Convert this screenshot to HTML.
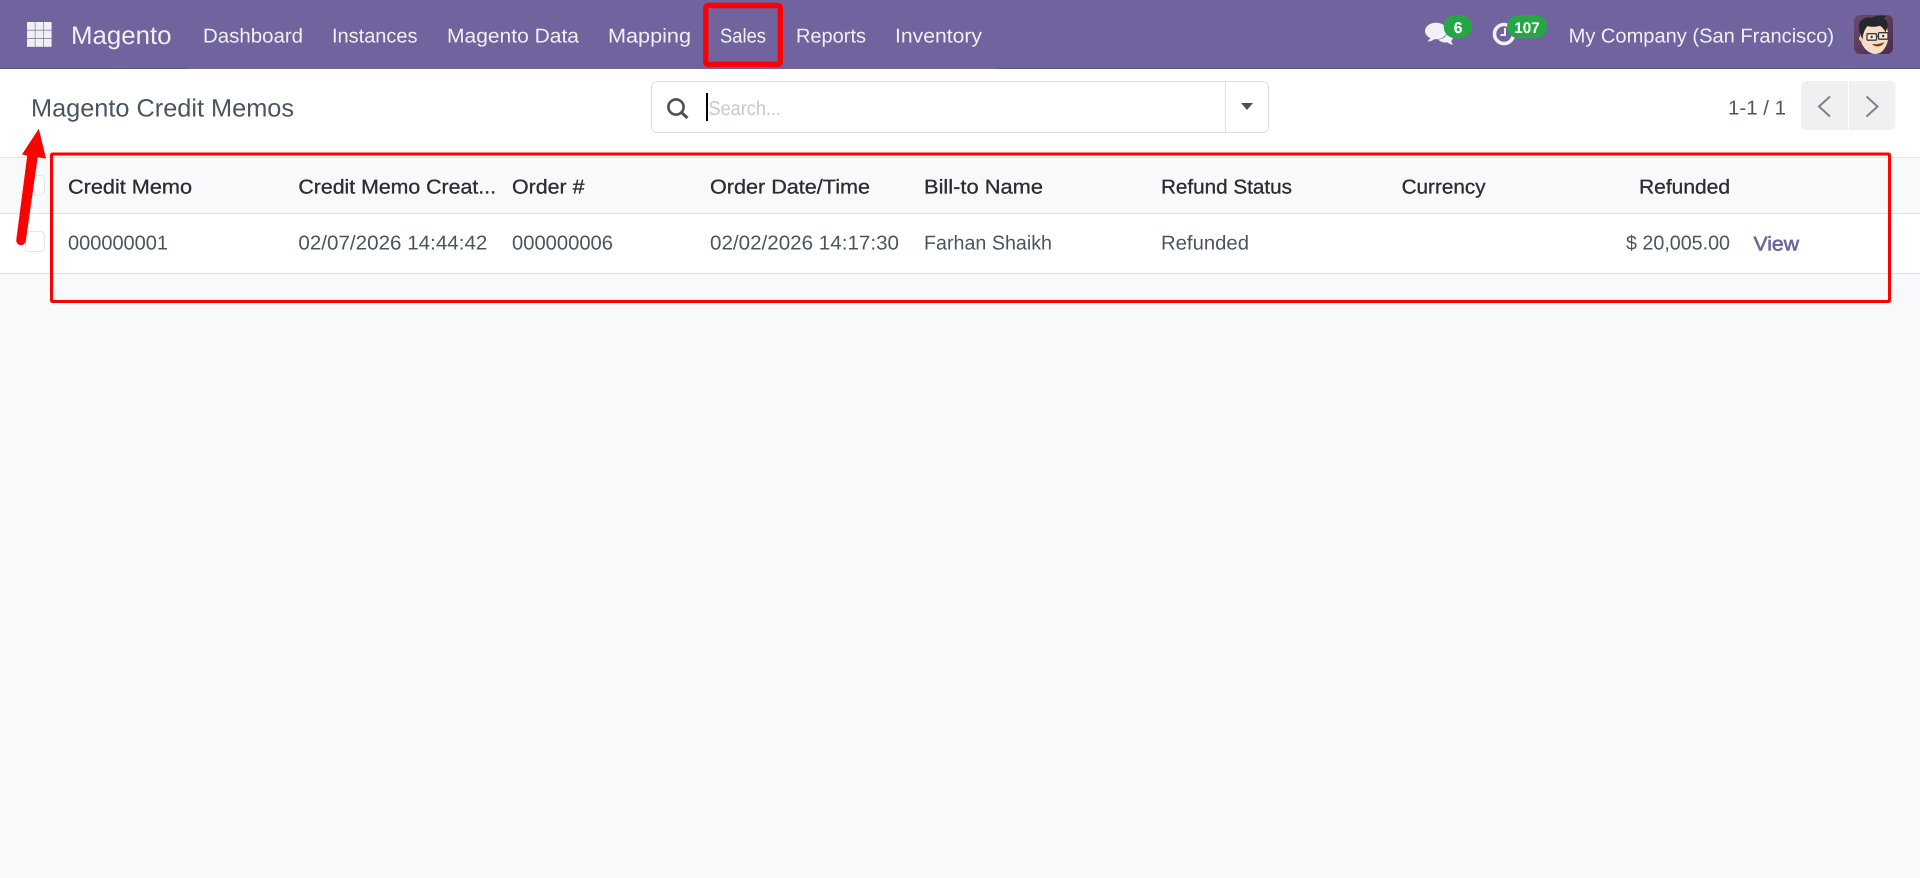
<!DOCTYPE html>
<html lang="en">
<head>
<meta charset="utf-8">
<title>Magento Credit Memos</title>
<style>
html,body{margin:0;padding:0;width:1920px;height:878px;overflow:hidden;background:#f8f9fb}
svg{display:block;position:absolute;left:0;top:0}
text{font-family:"Liberation Sans",Arial,sans-serif;text-rendering:geometricPrecision}
.n{font-size:20px;fill:#eff0f5}
.h{font-size:20px;fill:#2a2e33;stroke:#2a2e33;stroke-width:.3px}
.r{font-size:20px;fill:#4a5560}
</style>
</head>
<body>
<svg width="1920" height="878" viewBox="0 0 1920 878" xmlns="http://www.w3.org/2000/svg">
<defs>
<linearGradient id="av" x1="0" y1="0" x2="1" y2="1"><stop offset="0" stop-color="#6a4a70"/><stop offset="1" stop-color="#4b2c48"/></linearGradient>
<clipPath id="avc"><rect x="1854" y="15" width="39" height="39" rx="6"/></clipPath>
</defs>
<rect width="1920" height="878" fill="#f8f9fb"/>

<!-- navbar -->
<rect width="1920" height="69" fill="#71639e"/>
<rect x="0" y="68" width="188" height="1" fill="#5f5289"/>
<rect x="996" y="68" width="924" height="1" fill="#5f5289"/>
<g fill="#f0f0f4">
<rect x="27" y="22" width="7.8" height="7.8"/><rect x="35.4" y="22" width="7.8" height="7.8"/><rect x="43.8" y="22" width="7.8" height="7.8"/>
<rect x="27" y="30.5" width="7.8" height="7.8"/><rect x="35.4" y="30.5" width="7.8" height="7.8"/><rect x="43.8" y="30.5" width="7.8" height="7.8"/>
<rect x="27" y="39" width="7.8" height="7.8"/><rect x="35.4" y="39" width="7.8" height="7.8"/><rect x="43.8" y="39" width="7.8" height="7.8"/>
</g>
<text x="71" y="44" class="n" style="font-size:25.5px" textLength="100.5" lengthAdjust="spacingAndGlyphs">Magento</text>
<text x="203" y="42.7" class="n" textLength="100" lengthAdjust="spacingAndGlyphs">Dashboard</text>
<text x="332" y="42.7" class="n" textLength="85.5" lengthAdjust="spacingAndGlyphs">Instances</text>
<text x="447" y="42.7" class="n" textLength="132" lengthAdjust="spacingAndGlyphs">Magento Data</text>
<text x="608" y="42.7" class="n" textLength="83" lengthAdjust="spacingAndGlyphs">Mapping</text>
<text x="720" y="42.7" class="n" textLength="46" lengthAdjust="spacingAndGlyphs">Sales</text>
<text x="796" y="42.7" class="n" textLength="70" lengthAdjust="spacingAndGlyphs">Reports</text>
<text x="895" y="42.7" class="n" textLength="87" lengthAdjust="spacingAndGlyphs">Inventory</text>
<rect x="705.7" y="5.5" width="74.6" height="59" rx="2.5" fill="none" stroke="#ff0000" stroke-width="5.4"/>

<!-- chat icon -->
<g fill="#f0f0f5">
<ellipse cx="1436" cy="31" rx="11" ry="8.3"/>
<path d="M1431 37.500l-3.500 4c2.500 0 5-.7 7-2.500z"/>
<path d="M1447.500 31c3.300 1.300 5.500 3.500 5.500 6 0 1.500-.6 2.800-1.700 3.800.2 1.500.8 3 1.700 4.200-2.300-.6-4-1.500-5.500-2.600-3.300.6-7.500-.6-9.500-3 5 0 9.700-3.400 9.500-8.400z"/>
</g>
<rect x="1443.700" y="15" width="28.300" height="23.300" rx="11.600" fill="#26a745"/>
<text x="1458" y="33.200" text-anchor="middle" font-size="15.500" font-weight="700" fill="#fff" stroke="#fff" stroke-width=".2">6</text>

<!-- clock icon -->
<circle cx="1504" cy="34" r="9.500" fill="none" stroke="#f0f0f5" stroke-width="3.600"/>
<path d="M1505 28v7h-4.500" fill="none" stroke="#f0f0f5" stroke-width="2"/>
<rect x="1507" y="15" width="40" height="23.300" rx="11.600" fill="#26a745"/>
<text x="1527" y="33.200" text-anchor="middle" font-size="15.500" font-weight="700" fill="#fff" textLength="25.500" lengthAdjust="spacingAndGlyphs">107</text>

<text x="1568.600" y="42.700" class="n" textLength="265.500" lengthAdjust="spacingAndGlyphs">My Company (San Francisco)</text>

<!-- avatar -->
<g clip-path="url(#avc)">
<rect x="1854" y="15" width="39" height="39" fill="url(#av)"/>
<path d="M1860 33c-.5 9 4 17.500 12 20.500 3 1 7 .5 10-2 4-4 6.500-10 6.500-17l-2-9-20-1z" fill="#f8dcc4"/>
<circle cx="1861.500" cy="38.500" r="2.600" fill="#f2c8a8"/>
<path d="M1862.500 39c-2.500-4-4-10-3.500-14 .5-3.500 3-6 6.500-7 3-1 5 0 7-.7 3.500-1.300 9-2.500 14-1.300-1 1-2 1.600-3 2.300 2.500 1 4 3 4 5.500 0 3-.7 6-2 8.500-1.500-3-3-5-5.500-6.500-4.500 1.300-9 1.300-12.500.2-2 2.500-4.500 6.500-5 13z" fill="#26272b"/>
<rect x="1867" y="33.700" width="9.500" height="6.500" rx="1" fill="#fbe9d9" stroke="#3a3a3e" stroke-width="1.300"/>
<rect x="1878.500" y="32.700" width="9.500" height="6.500" rx="1" fill="#fbe9d9" stroke="#3a3a3e" stroke-width="1.300"/>
<path d="M1876.500 36.500l2-.5" stroke="#3a3a3e" stroke-width="1.200"/>
<circle cx="1871.700" cy="37" r="1.200" fill="#333"/><circle cx="1883.200" cy="36" r="1.200" fill="#333"/>
<path d="M1873 44.500c3 2.500 8 2 10.500-1.500-3 1-7 1.800-10.500 1.500z" fill="#7a3f33" stroke="#7a3f33" stroke-width=".8"/>
</g>

<!-- control panel -->
<rect x="0" y="69" width="1920" height="88" fill="#fff"/>
<text x="31" y="116.500" font-size="25px" fill="#4a5560" textLength="263" lengthAdjust="spacingAndGlyphs">Magento Credit Memos</text>

<rect x="651.500" y="81.500" width="617" height="51" rx="5.500" fill="#fff" stroke="#dee2e6"/>
<rect x="1225" y="82" width="1" height="50" fill="#dee2e6"/>
<circle cx="676" cy="107" r="7.600" fill="none" stroke="#495057" stroke-width="2.600"/>
<path d="M681.500 112.500l6 5.500" fill="none" stroke="#495057" stroke-width="3"/>
<rect x="706" y="93" width="2" height="28" fill="#000"/>
<text x="708.500" y="115" font-size="20px" fill="#c6cad1" textLength="72.500" lengthAdjust="spacingAndGlyphs">Search...</text>
<path d="M1241 103h12l-6 7z" fill="#495057"/>

<text x="1728" y="114.500" font-size="20px" fill="#4a5560" textLength="58" lengthAdjust="spacingAndGlyphs">1-1 / 1</text>
<rect x="1801" y="81" width="94.500" height="49" rx="5.500" fill="#eef0f2"/>
<rect x="1848" y="81" width="1" height="49" fill="#fff"/>
<path d="M1830 96.500l-11 10 11 10" fill="none" stroke="#7c8187" stroke-width="2"/>
<path d="M1866.500 96.500l11 10-11 10" fill="none" stroke="#7c8187" stroke-width="2"/>

<!-- table -->
<rect x="0" y="157" width="1920" height="1" fill="#e4e6ea"/>
<rect x="0" y="158" width="1920" height="55" fill="#f8f9fb"/>
<rect x="0" y="213" width="1920" height="1" fill="#dee2e6"/>
<rect x="0" y="214" width="1920" height="59" fill="#fff"/>
<rect x="0" y="273" width="1920" height="1" fill="#dee2e6"/>

<rect x="25.500" y="175.500" width="19" height="19.500" rx="4" fill="#fff" stroke="#e3e5e8"/>
<rect x="25.500" y="231.500" width="19" height="20" rx="4" fill="#fff" stroke="#e3e5e8"/>

<text x="68" y="193.500" class="h" textLength="124" lengthAdjust="spacingAndGlyphs">Credit Memo</text>
<text x="298.400" y="193.500" class="h" textLength="197.600" lengthAdjust="spacingAndGlyphs">Credit Memo Creat...</text>
<text x="512" y="193.500" class="h" textLength="72.500" lengthAdjust="spacingAndGlyphs">Order #</text>
<text x="710" y="193.500" class="h" textLength="160" lengthAdjust="spacingAndGlyphs">Order Date/Time</text>
<text x="924" y="193.500" class="h" textLength="119" lengthAdjust="spacingAndGlyphs">Bill-to Name</text>
<text x="1161" y="193.500" class="h" textLength="131" lengthAdjust="spacingAndGlyphs">Refund Status</text>
<text x="1401.600" y="193.500" class="h" textLength="84" lengthAdjust="spacingAndGlyphs">Currency</text>
<text x="1639" y="193.500" class="h" textLength="91" lengthAdjust="spacingAndGlyphs">Refunded</text>

<text x="68" y="249.500" class="r" textLength="100" lengthAdjust="spacingAndGlyphs">000000001</text>
<text x="298.400" y="249.500" class="r" textLength="189" lengthAdjust="spacingAndGlyphs">02/07/2026 14:44:42</text>
<text x="512" y="249.500" class="r" textLength="101" lengthAdjust="spacingAndGlyphs">000000006</text>
<text x="710" y="249.500" class="r" textLength="189" lengthAdjust="spacingAndGlyphs">02/02/2026 14:17:30</text>
<text x="924" y="249.500" class="r" textLength="128" lengthAdjust="spacingAndGlyphs">Farhan Shaikh</text>
<text x="1161" y="249.500" class="r" textLength="88" lengthAdjust="spacingAndGlyphs">Refunded</text>
<text x="1626" y="249.500" class="r" textLength="104" lengthAdjust="spacingAndGlyphs">$ 20,005.00</text>
<text x="1753.500" y="250.500" font-size="20px" fill="#71639e" stroke="#71639e" stroke-width=".6" textLength="45.500" lengthAdjust="spacingAndGlyphs">View</text>

<!-- annotations -->
<rect x="51.500" y="154" width="1838" height="147.500" rx="1" fill="none" stroke="#ff0000" stroke-width="3"/>
<path d="M38.700 129.300L45.700 158.300L37.500 157L25.500 241a4.500 4.500 0 0 1-9-1L27.500 155.500L22.300 154.300z" fill="#ff0000" stroke="#ff0000" stroke-width=".5" stroke-linejoin="round"/>
</svg>
</body>
</html>
